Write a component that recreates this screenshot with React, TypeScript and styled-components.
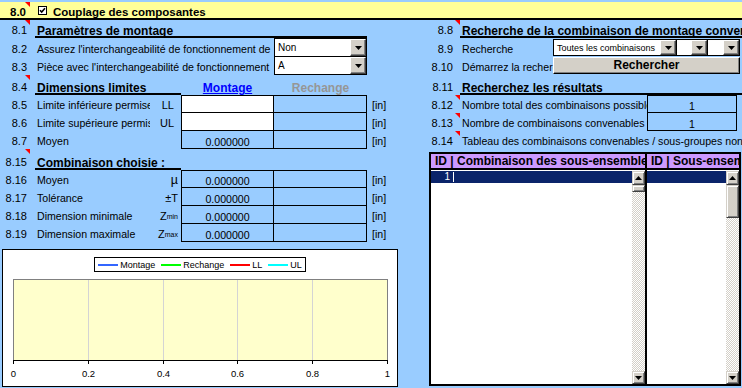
import { ReactNode } from "react";
import styled, { createGlobalStyle } from "styled-components";

const FONT = `"Liberation Sans", Arial, sans-serif`;

const GlobalStyle = createGlobalStyle`
  html, body {
    margin: 0;
    padding: 0;
    background: #99ccff;
  }
`;

const Sheet = styled.div`
  width: 742px;
  height: 388px;
  overflow: hidden;
  background: #99ccff;
  color: #000;
  font-family: ${FONT};
  font-size: 10.6px;
  display: flex;
  flex-direction: column;
`;

// title band
const TitleBar = styled.div`
  margin-top: 2px;
  height: 16px;
  background: #ffff99;
  border-bottom: 2px solid #000;
  display: grid;
  grid-template-columns: 31px 7px 9px 6px 1fr;
  align-items: center;
`;

const TitleNum = styled.div`
  position: relative;
  align-self: stretch;
  display: flex;
  align-items: flex-end;
  justify-content: flex-end;
  padding-right: 5px;
  font-size: 11.5px;
  font-weight: bold;
  line-height: 11px;
`;

const TitleText = styled.div`
  grid-column: 5;
  align-self: stretch;
  display: flex;
  align-items: flex-end;
  font-size: 11.5px;
  font-weight: bold;
  line-height: 11px;
  white-space: nowrap;
`;

const CheckBox = styled.svg`
  grid-column: 3;
  display: block;
`;

const Flag = styled.span<{ $right?: number }>`
  position: absolute;
  top: 0;
  right: ${(p) => p.$right ?? 1}px;
  width: 0;
  height: 0;
  border-top: 5px solid #ff0000;
  border-left: 5px solid transparent;
`;

const Body = styled.div`
  display: flex;
  flex: 1;
`;

// left block
const LeftPanel = styled.div`
  width: 420px;
  display: flex;
  flex-direction: column;
`;

const LeftRow = styled.div<{ $h: number }>`
  display: grid;
  grid-template-columns: 31px 4px 115px 31px 93px 93px 31px;
  height: ${(p) => p.$h}px;
`;

const RightPanel = styled.div`
  width: 322px;
  display: flex;
  flex-direction: column;
  overflow: hidden;
`;

const RightRow = styled.div<{ $h: number }>`
  display: grid;
  grid-template-columns: 40px 93px 94px 93px 2px;
  height: ${(p) => p.$h}px;
`;

const Num = styled.div<{ $pad?: number }>`
  grid-column: 1;
  position: relative;
  display: flex;
  align-items: flex-end;
  justify-content: flex-end;
  padding: 0 ${(p) => p.$pad ?? 4}px 1px 0;
  font-size: 11px;
  line-height: 13px;
  white-space: nowrap;
`;

const Label = styled.div<{ $col: string; $pad?: number }>`
  grid-column: ${(p) => p.$col};
  display: flex;
  align-items: flex-end;
  padding: 0 0 1px ${(p) => p.$pad ?? 2}px;
  line-height: 13px;
  white-space: nowrap;
  overflow: hidden;
`;

const Heading = styled.div<{ $col: string }>`
  grid-column: ${(p) => p.$col};
  display: flex;
  align-items: flex-end;
  padding-left: 2px;
  border-bottom: 2px solid #000;
  font-size: 12px;
  font-weight: bold;
  line-height: 10px;
  white-space: nowrap;
`;

const ColHead = styled.div<{ $col: number; $muted?: boolean }>`
  grid-column: ${(p) => p.$col};
  display: flex;
  align-items: flex-end;
  justify-content: center;
  padding-bottom: 2px;
  font-size: 12px;
  font-weight: bold;
  line-height: 10px;
  color: ${(p) => (p.$muted ? "#969696" : "#0000ff")};
  text-decoration: ${(p) => (p.$muted ? "none" : "underline")};
`;

const Sym = styled.div<{ $pad: number }>`
  grid-column: 4;
  display: flex;
  align-items: flex-end;
  justify-content: flex-end;
  padding: 0 ${(p) => p.$pad}px 1px 0;
  line-height: 13px;
  font-size: 11px;
  white-space: nowrap;
`;

const Mu = styled.span`
  font-size: 12.5px;
`;

const Sub = styled.span`
  font-size: 7px;
  vertical-align: -2px;
`;

const Value = styled.div<{ $col: number; $input?: boolean; $top?: boolean; $left?: boolean; $w?: number }>`
  grid-column: ${(p) => p.$col};
  ${(p) => (p.$w ? `width: ${p.$w}px;` : "")}
  box-sizing: border-box;
  border: 1px solid #000;
  border-top-width: ${(p) => (p.$top ? 1 : 0)}px;
  border-left-width: ${(p) => (p.$left ? 1 : 0)}px;
  background: ${(p) => (p.$input ? "#ffffff" : "transparent")};
  display: flex;
  align-items: flex-end;
  justify-content: center;
  line-height: 11px;
  font-size: 10.6px;
`;

const Unit = styled.div`
  grid-column: 7;
  display: flex;
  align-items: flex-end;
  padding: 0 0 1px 5px;
  line-height: 13px;
`;

// combo boxes
const Select = styled.div<{ $col?: string; $w?: number; $joined?: boolean }>`
  ${(p) => (p.$col ? `grid-column: ${p.$col};` : "")}
  ${(p) => (p.$w ? `width: ${p.$w}px;` : "")}
  box-sizing: border-box;
  display: flex;
  background: #fff;
  border: 1px solid #000;
  border-top-width: ${(p) => (p.$joined ? 0 : 1)}px;
  & + & {
    border-left: none;
  }
`;

const SelectText = styled.span<{ $size: number }>`
  flex: 1;
  display: flex;
  align-items: center;
  padding-left: 3px;
  font-size: ${(p) => p.$size}px;
  white-space: nowrap;
  overflow: hidden;
`;

const DropButton = styled.span`
  width: 16px;
  flex: 0 0 16px;
  box-sizing: border-box;
  background: #d4d0c8;
  border: 1px solid;
  border-color: #ffffff #404040 #404040 #ffffff;
  box-shadow: inset -1px -1px #808080;
  display: flex;
  align-items: center;
  justify-content: center;
`;

const SelectGroup = styled.div`
  grid-column: 3 / span 2;
  align-self: center;
  height: 17px;
  display: flex;
`;

const PushButton = styled.div`
  grid-column: 3 / span 2;
  align-self: start;
  height: 17px;
  box-sizing: border-box;
  background: #d4d0c8;
  border: 1px solid;
  border-color: #ffffff #000000 #000000 #ffffff;
  box-shadow: inset -1px -1px #808080;
  display: flex;
  align-items: center;
  justify-content: center;
  font-size: 12px;
  font-weight: bold;
  line-height: 13px;
`;

// results lists
const Results = styled.div`
  margin: 3px 0 0 9px;
  width: 312px;
  height: 234px;
  box-sizing: border-box;
  display: flex;
  border: 2px solid #000;
  border-right: none;
  background: #fff;
`;

const ListColumn = styled.div<{ $w: number }>`
  width: ${(p) => p.$w}px;
  display: flex;
  flex-direction: column;
  border-right: 2px solid #000;
`;

const ListHeader = styled.div`
  height: 14px;
  background: #cc99ff;
  border-bottom: 2px solid #000;
  padding-left: 4px;
  font-size: 12px;
  font-weight: bold;
  line-height: 14px;
  white-space: nowrap;
  overflow: hidden;
`;

const ListBody = styled.div`
  flex: 1;
  display: flex;
  padding-top: 1px;
`;

const Items = styled.div`
  flex: 1;
  display: flex;
  flex-direction: column;
`;

const ItemRow = styled.div<{ $selected?: boolean }>`
  height: 12px;
  display: grid;
  grid-template-columns: 22px 1fr;
  background: ${(p) => (p.$selected ? "#0a246a" : "transparent")};
  color: #fff;
  font-size: 10px;
  line-height: 12px;
`;

const ItemId = styled.span`
  text-align: right;
  padding-right: 3px;
`;

const ItemText = styled.span`
  border-left: 1px solid #fff;
  margin: 1px 0;
`;

const ScrollBar = styled.div`
  width: 13px;
  display: flex;
  flex-direction: column;
`;

const ScrollPart = styled.div<{ $h: number }>`
  height: ${(p) => p.$h}px;
  box-sizing: border-box;
  background: #d4d0c8;
  border: 1px solid;
  border-color: #d4d0c8 #404040 #404040 #d4d0c8;
  box-shadow: inset 1px 1px #ffffff, inset -1px -1px #808080;
  display: flex;
  align-items: center;
  justify-content: center;
`;

const ScrollTrack = styled.div`
  flex: 1;
  background: repeating-conic-gradient(#d4d0c8 0% 25%, #ffffff 0% 50%) 0 0 / 2px 2px;
`;

// chart
const ChartBox = styled.div`
  margin: 7px 0 0 2px;
  width: 396px;
  height: 138px;
  box-sizing: border-box;
  border: 1px solid #000;
  background: #fff;
  display: flex;
  flex-direction: column;
  align-items: center;
  padding-top: 7px;
`;

const Legend = styled.div`
  height: 15px;
  box-sizing: border-box;
  border: 1px solid #000;
  padding: 0 3px 0 3px;
  display: flex;
  align-items: center;
  gap: 6px;
  font-size: 9px;
`;

const LegendItem = styled.span`
  display: flex;
  align-items: center;
  gap: 2px;
`;

const LegendLine = styled.span<{ $color: string }>`
  width: 20px;
  height: 2px;
  background: ${(p) => p.$color};
`;

const Arrow = ({ up }: { up?: boolean }) => (
  <svg width="7" height="4" viewBox="0 0 7 4">
    <path d={up ? "M0 4h7L3.5 0z" : "M0 0h7L3.5 4z"} fill="#000" />
  </svg>
);

const ComboBox = ({ text, size, col, w, joined }: { text: string; size: number; col?: string; w?: number; joined?: boolean }) => (
  <Select $col={col} $w={w} $joined={joined}>
    <SelectText $size={size}>{text}</SelectText>
    <DropButton>
      <Arrow />
    </DropButton>
  </Select>
);

const VScroll = ({ thumb }: { thumb: number }) => (
  <ScrollBar>
    <ScrollPart $h={14}>
      <Arrow up />
    </ScrollPart>
    <ScrollPart $h={thumb} />
    <ScrollTrack />
    <ScrollPart $h={13}>
      <Arrow />
    </ScrollPart>
  </ScrollBar>
);

type DimRow = { n: string; label: string; sym?: ReactNode; symPad?: number; value?: string; input?: boolean; top?: boolean };

const limits: DimRow[] = [
  { n: "8.5", label: "Limite inférieure permise", sym: "LL", symPad: 7, input: true, top: true },
  { n: "8.6", label: "Limite supérieure permise", sym: "UL", symPad: 7, input: true },
  { n: "8.7", label: "Moyen", value: "0.000000" },
];

const chosen: DimRow[] = [
  { n: "8.16", label: "Moyen", sym: <Mu>µ</Mu>, value: "0.000000", top: true },
  { n: "8.17", label: "Tolérance", sym: "±T", value: "0.000000" },
  { n: "8.18", label: "Dimension minimale", sym: <>Z<Sub>min</Sub></>, value: "0.000000" },
  { n: "8.19", label: "Dimension maximale", sym: <>Z<Sub>max</Sub></>, value: "0.000000" },
];

const legend = [
  { name: "Montage", color: "#3366ff" },
  { name: "Rechange", color: "#00ff00" },
  { name: "LL", color: "#ff0000" },
  { name: "UL", color: "#00ffff" },
];

const ticks = [0, 0.2, 0.4, 0.6, 0.8, 1];

const DimensionRow = ({ row }: { row: DimRow }) => (
  <LeftRow $h={18}>
    <Num>{row.n}</Num>
    <Label $col="3">{row.label}</Label>
    {row.sym && <Sym $pad={row.symPad ?? 3}>{row.sym}</Sym>}
    <Value $col={5} $left $top={row.top} $input={row.input}>
      {row.value}
    </Value>
    <Value $col={6} $top={row.top} />
    <Unit>[in]</Unit>
  </LeftRow>
);

const Chart = () => (
  <ChartBox>
    <Legend>
      {legend.map((l) => (
        <LegendItem key={l.name}>
          <LegendLine $color={l.color} />
          {l.name}
        </LegendItem>
      ))}
    </Legend>
    <svg width="394" height="113" viewBox="0 0 394 113" shapeRendering="crispEdges">
      <rect x="10.5" y="7.5" width="374" height="81" fill="#ffffcc" stroke="#808080" />
      {ticks.slice(1, -1).map((t) => {
        const x = Math.round(10 + 374 * t) + 0.5;
        return <line key={t} x1={x} y1="8" x2={x} y2="88" stroke="#d4d4d4" />;
      })}
      <line x1="10" y1="88.5" x2="385" y2="88.5" stroke="#000" />
      {ticks.map((t) => {
        const x = Math.round(10 + 374 * t) + 0.5;
        return (
          <g key={t}>
            <line x1={x} y1="88" x2={x} y2="92" stroke="#000" />
            <text x={x} y="105" textAnchor="middle" fontSize="9.5" fontFamily={FONT} fill="#000">
              {t}
            </text>
          </g>
        );
      })}
    </svg>
  </ChartBox>
);

export default function App() {
  return (
    <Sheet>
      <GlobalStyle />
      <TitleBar>
        <TitleNum>
          8.0
          <Flag />
        </TitleNum>
        <CheckBox width="9" height="9" viewBox="0 0 9 9">
          <rect x="0.5" y="0.5" width="8" height="8" fill="#fff" stroke="#000" />
          <path d="M2 4.2 L3.7 6 L7 2.3" stroke="#000" strokeWidth="1.6" fill="none" />
        </CheckBox>
        <TitleText>Couplage des composantes</TitleText>
      </TitleBar>

      <Body>
        <LeftPanel>
          <LeftRow $h={18}>
            <Num>
              8.1
              <Flag />
            </Num>
            <Heading $col="3 / span 4">Paramètres de montage</Heading>
          </LeftRow>
          <LeftRow $h={19}>
            <Num>8.2</Num>
            <Label $col="3 / span 3">Assurez l'interchangeabilité de fonctionnement de</Label>
            <ComboBox col="6" text="Non" size={10} />
          </LeftRow>
          <LeftRow $h={18}>
            <Num>8.3</Num>
            <Label $col="3 / span 3">Pièce avec l'interchangeabilité de fonctionnement</Label>
            <ComboBox col="6" text="A" size={10} joined />
          </LeftRow>
          <LeftRow $h={20}>
            <Num>
              8.4
              <Flag />
            </Num>
            <Heading $col="3 / span 2">Dimensions limites</Heading>
            <ColHead $col={5}>Montage</ColHead>
            <ColHead $col={6} $muted>
              Rechange
            </ColHead>
          </LeftRow>
          {limits.map((r) => (
            <DimensionRow key={r.n} row={r} />
          ))}
          <LeftRow $h={21}>
            <Num>
              8.15
              <Flag />
            </Num>
            <Heading $col="3 / span 2">Combinaison choisie :</Heading>
          </LeftRow>
          {chosen.map((r) => (
            <DimensionRow key={r.n} row={r} />
          ))}
          <Chart />
        </LeftPanel>

        <RightPanel>
          <RightRow $h={18}>
            <Num $pad={7}>
              8.8
              <Flag $right={0} />
            </Num>
            <Heading $col="2 / span 4">Recherche de la combinaison de montage convenable</Heading>
          </RightRow>
          <RightRow $h={19}>
            <Num $pad={7}>8.9</Num>
            <Label $col="2">Recherche</Label>
            <SelectGroup>
              <ComboBox w={124} text="Toutes les combinaisons" size={9} />
              <ComboBox w={31} text="" size={9} />
              <ComboBox w={32} text="" size={9} />
            </SelectGroup>
          </RightRow>
          <RightRow $h={18}>
            <Num $pad={7}>8.10</Num>
            <Label $col="2">Démarrez la recherche</Label>
            <PushButton>Rechercher</PushButton>
          </RightRow>
          <RightRow $h={20}>
            <Num $pad={7}>8.11</Num>
            <Heading $col="2 / span 4">Recherchez les résultats</Heading>
          </RightRow>
          <RightRow $h={18}>
            <Num $pad={7}>
              8.12
              <Flag $right={0} />
            </Num>
            <Label $col="2 / span 2">Nombre total des combinaisons possibles</Label>
            <Value $col={4} $w={90} $left $top>
              1
            </Value>
          </RightRow>
          <RightRow $h={18}>
            <Num $pad={7}>
              8.13
              <Flag $right={0} />
            </Num>
            <Label $col="2 / span 2">Nombre de combinaisons convenables</Label>
            <Value $col={4} $w={90} $left>
              1
            </Value>
          </RightRow>
          <RightRow $h={18}>
            <Num $pad={7}>
              8.14
              <Flag $right={0} />
            </Num>
            <Label $col="2 / span 4">Tableau des combinaisons convenables / sous-groupes non utilisés</Label>
          </RightRow>
          <Results>
            <ListColumn $w={214}>
              <ListHeader>ID | Combinaison des sous-ensembles</ListHeader>
              <ListBody>
                <Items>
                  <ItemRow $selected>
                    <ItemId>1</ItemId>
                    <ItemText />
                  </ItemRow>
                </Items>
                <VScroll thumb={7} />
              </ListBody>
            </ListColumn>
            <ListColumn $w={92}>
              <ListHeader>ID | Sous-ensembles</ListHeader>
              <ListBody>
                <Items>
                  <ItemRow $selected />
                </Items>
                <VScroll thumb={33} />
              </ListBody>
            </ListColumn>
          </Results>
        </RightPanel>
      </Body>
    </Sheet>
  );
}
